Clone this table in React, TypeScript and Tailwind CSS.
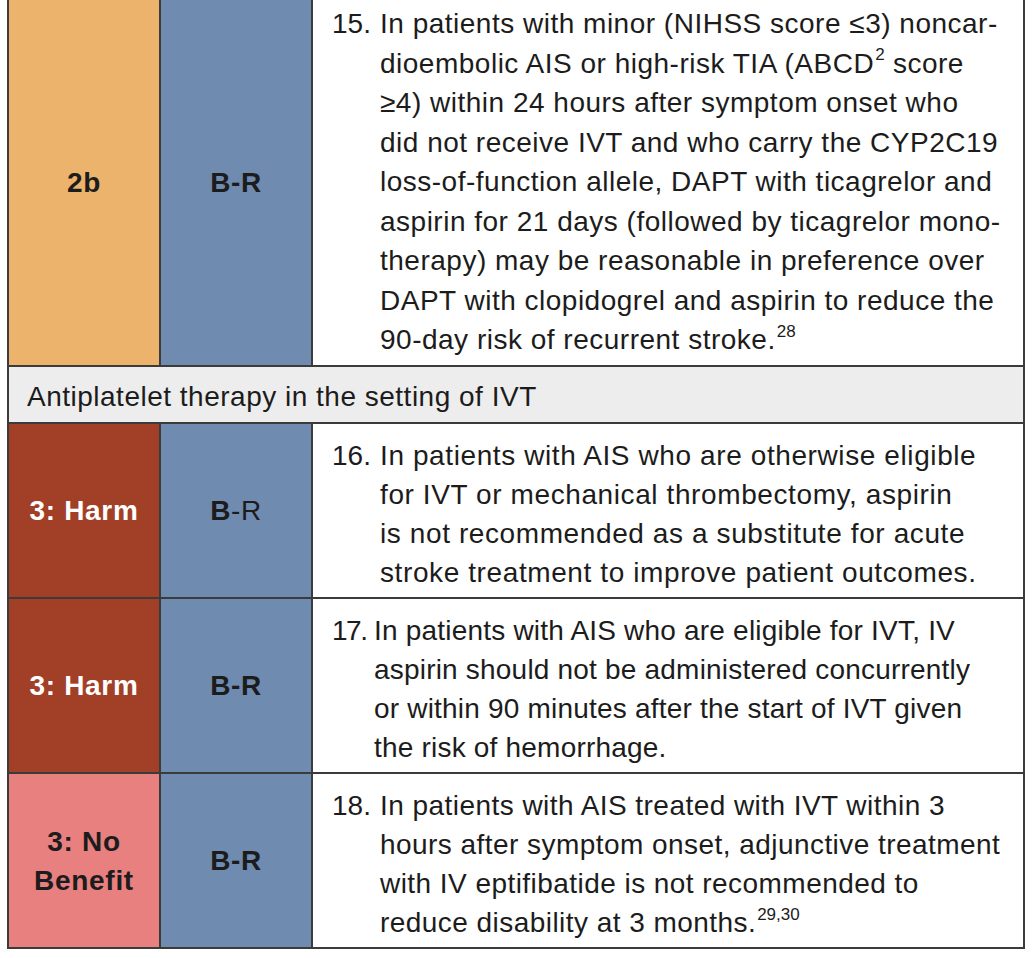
import React from "react";

const font = { fontFamily: '"Liberation Sans", Arial, sans-serif' };

function Sup({ children }: { children: React.ReactNode }) {
  return <sup className="text-[17px] tracking-normal align-[4px] ml-[1px]">{children}</sup>;
}

function Rec({
  num,
  lines,
  indent,
  track,
  numTrack,
}: {
  num: string;
  lines: React.ReactNode[];
  indent: string;
  track: string;
  numTrack: string;
}) {
  return (
    <div className={"flex text-[28px] text-[#1c1c1c] " + track}>
      <div className="flex flex-col">
        {lines.map((l, i) => (
          <div key={i} className="whitespace-nowrap flex">
            <span className={indent + " shrink-0 " + numTrack}>{i === 0 ? num : ""}</span>
            <span>{l}</span>
          </div>
        ))}
      </div>
    </div>
  );
}

function Row({
  bg1,
  label,
  label2,
  h,
  children,
  pt,
}: {
  bg1: string;
  label: React.ReactNode;
  label2: React.ReactNode;
  h: string;
  children: React.ReactNode;
  pt: string;
}) {
  return (
    <div className={"grid grid-cols-[152px_152px_1fr] border-b-2 border-[#3b3b3b] " + h}>
      <div
        className={
          "flex items-center justify-center border-r-2 border-[#3b3b3b] text-[28px] tracking-[0.7px] font-bold leading-[39px] text-center " +
          bg1
        }
      >
        {label}
      </div>
      <div className="flex items-center justify-center border-r-2 border-[#3b3b3b] bg-[#6f8bb0] text-[28px] tracking-[0.5px] leading-[39px] text-[#1c1c1c]">
        {label2}
      </div>
      <div className={"bg-white pl-[19px] " + pt}>{children}</div>
    </div>
  );
}

export default function App() {
  return (
    <div className="w-[1036px] h-[958px] bg-white" style={font}>
      <div className="ml-[7px] w-[1018px] border-l-2 border-r-2 border-[#3b3b3b]">
        <Row
          bg1="bg-[#ebb36c] text-[#1c1c1c]"
          label="2b"
          label2={<b>B-R</b>}
          h="h-[368px] -mt-[1px]"
          pt="pt-[5px]"
        >
          <Rec
            num="15."
            indent="w-[48px]"
            numTrack="tracking-normal"
            track="tracking-[0.5px] leading-[39.5px]"
            lines={[
              "In patients with minor (NIHSS score ≤3) noncar-",
              <>
                dioembolic AIS or high-risk TIA (ABCD<Sup>2</Sup> score
              </>,
              "≥4) within 24 hours after symptom onset who",
              "did not receive IVT and who carry the CYP2C19",
              "loss-of-function allele, DAPT with ticagrelor and",
              "aspirin for 21 days (followed by ticagrelor mono-",
              "therapy) may be reasonable in preference over",
              "DAPT with clopidogrel and aspirin to reduce the",
              <>
                90-day risk of recurrent stroke.<Sup>28</Sup>
              </>,
            ]}
          />
        </Row>
        <div className="h-[57px] flex items-center pt-[4px] border-b-2 border-[#3b3b3b] bg-[#ededed] pl-[18px] text-[28px] tracking-[0.5px] text-[#1c1c1c]">
          Antiplatelet therapy in the setting of IVT
        </div>
        <Row
          bg1="bg-[#a13f27] text-white"
          label="3: Harm"
          label2={
            <span>
              <b>B</b>-R
            </span>
          }
          h="h-[175px]"
          pt="pt-[12px]"
        >
          <Rec
            num="16."
            indent="w-[48px]"
            numTrack="tracking-normal"
            track="tracking-[0.6px] leading-[39px]"
            lines={[
              "In patients with AIS who are otherwise eligible",
              "for IVT or mechanical thrombectomy, aspirin",
              "is not recommended as a substitute for acute",
              "stroke treatment to improve patient outcomes.",
            ]}
          />
        </Row>
        <Row
          bg1="bg-[#a13f27] text-white"
          label="3: Harm"
          label2={<b>B-R</b>}
          h="h-[175px]"
          pt="pt-[12px]"
        >
          <Rec
            num="17."
            indent="w-[42px]"
            numTrack="tracking-[-1.5px]"
            track="tracking-[0.2px] leading-[39px]"
            lines={[
              "In patients with AIS who are eligible for IVT, IV",
              "aspirin should not be administered concurrently",
              "or within 90 minutes after the start of IVT given",
              "the risk of hemorrhage.",
            ]}
          />
        </Row>
        <Row
          bg1="bg-[#e88080] text-[#1c1c1c]"
          label={
            <>
              3: No
              <br />
              Benefit
            </>
          }
          label2={<b>B-R</b>}
          h="h-[175px]"
          pt="pt-[12px]"
        >
          <Rec
            num="18."
            indent="w-[48px]"
            numTrack="tracking-normal"
            track="tracking-[0.45px] leading-[39px]"
            lines={[
              "In patients with AIS treated with IVT within 3",
              "hours after symptom onset, adjunctive treatment",
              "with IV eptifibatide is not recommended to",
              <>
                reduce disability at 3 months.<Sup>29,30</Sup>
              </>,
            ]}
          />
        </Row>
      </div>
    </div>
  );
}
